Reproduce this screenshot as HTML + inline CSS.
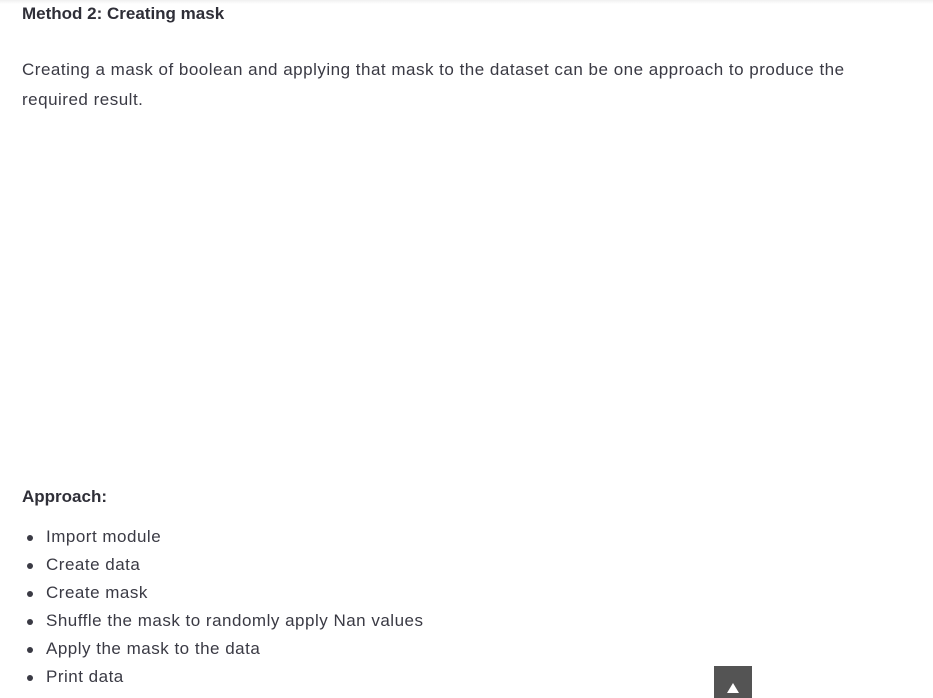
<!DOCTYPE html>
<html><head><meta charset="utf-8"><style>
body{margin:0;width:933px;height:698px;overflow:hidden;background:#fff;font-family:"Liberation Sans",sans-serif;color:#3a3a44;position:relative}
.top{position:absolute;left:0;top:0;width:933px;height:4px;background:linear-gradient(#f0f0f0,#fff)}
.h{position:absolute;left:22px;top:4px;font-size:17px;font-weight:bold;color:#2f2f38}
.p{position:absolute;left:22px;top:55px;width:835px;font-size:17px;line-height:30px;letter-spacing:0.5px}
.a{position:absolute;left:22px;top:487px;font-size:17px;font-weight:bold;color:#2f2f38}
ul{position:absolute;left:0;top:523px;margin:0;padding-left:46px;font-size:17px;line-height:28px;letter-spacing:0.5px;list-style:none}
li{position:relative}
li:before{content:"";position:absolute;left:-19px;top:12px;width:6px;height:6px;border-radius:50%;background:#3a3a44}
.btn{position:absolute;left:714px;top:666px;width:38px;height:32px;background:#545454}
.btn:after{content:"";position:absolute;left:13px;top:17px;border-left:6px solid transparent;border-right:6px solid transparent;border-bottom:10px solid #fff}
</style></head><body>
<div class="top"></div>
<div class="h">Method 2: Creating mask</div>
<div class="p">Creating a mask of boolean and applying that mask to the dataset can be one approach to produce the required result.</div>
<div class="a">Approach:</div>
<ul>
<li>Import module</li>
<li>Create data</li>
<li>Create mask</li>
<li>Shuffle the mask to randomly apply Nan values</li>
<li>Apply the mask to the data</li>
<li>Print data</li>
</ul>
<div class="btn"></div>
</body></html>
